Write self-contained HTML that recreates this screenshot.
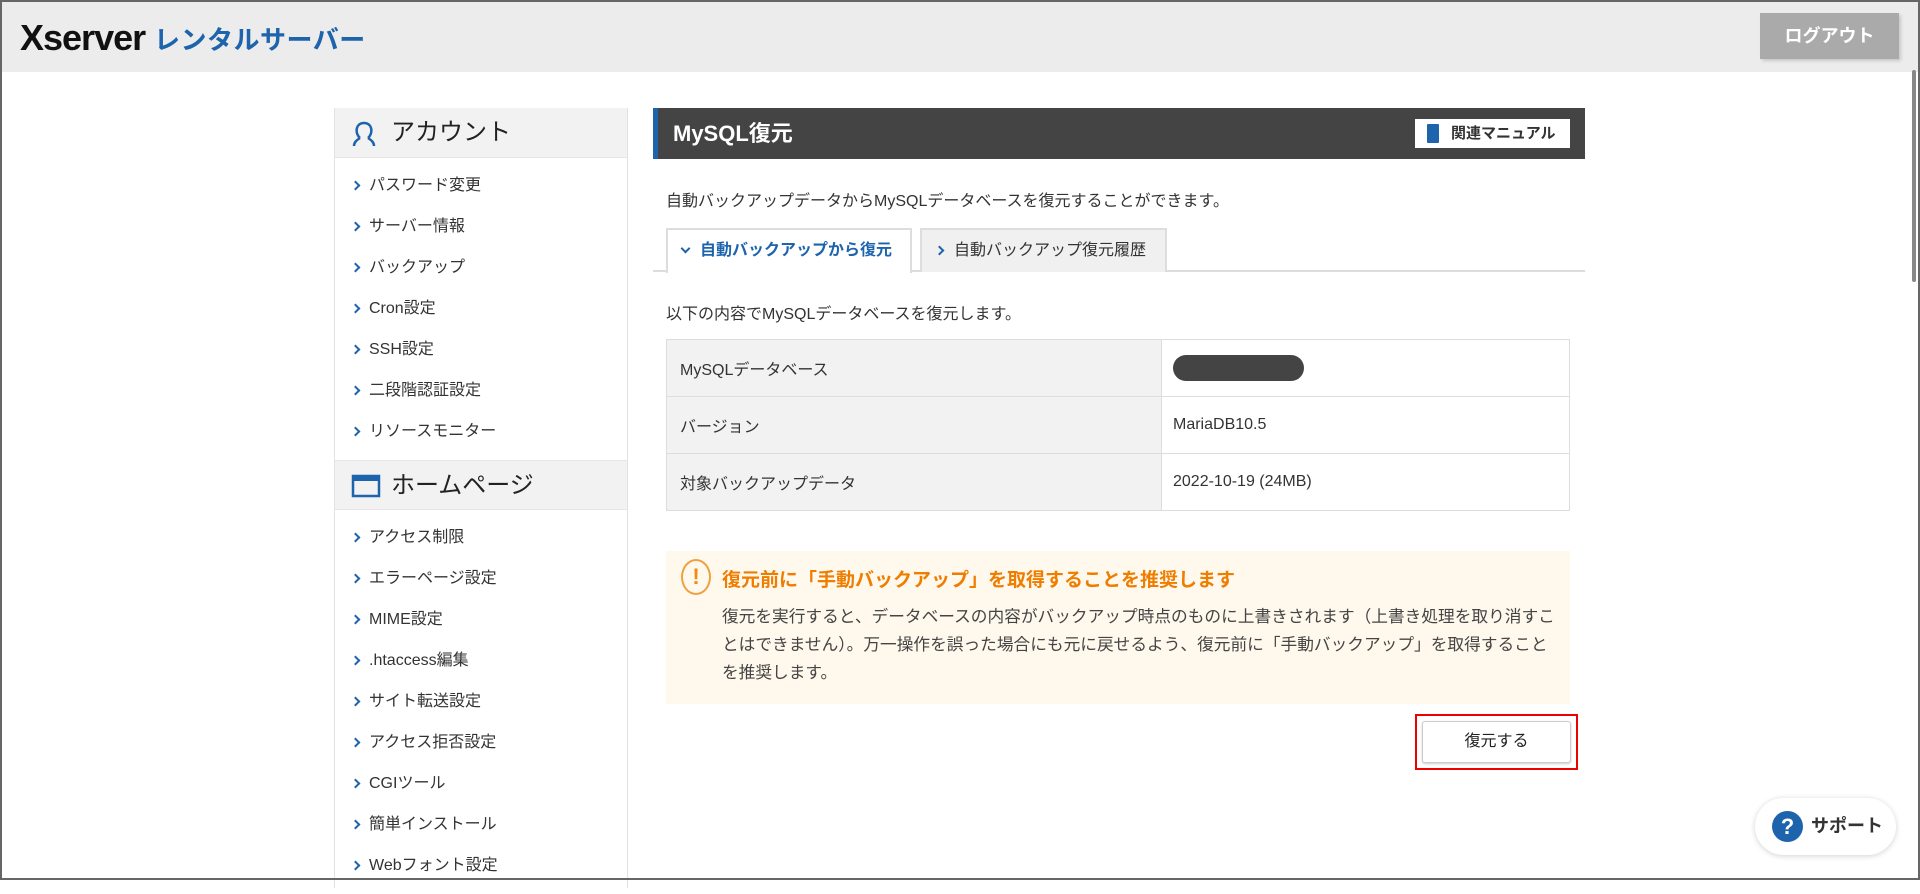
<!DOCTYPE html>
<html><head><meta charset="utf-8"><style>
*{margin:0;padding:0;box-sizing:border-box}
body{width:1920px;height:880px;overflow:hidden;background:#fff;font-family:"Liberation Sans","Noto Sans CJK JP",sans-serif;color:#333;position:relative}
.frame{position:absolute;inset:0;border:2px solid #666;pointer-events:none;z-index:9}
.hdr{position:absolute;left:0;top:0;width:1920px;height:72px;background:#ececec}
.logo1{position:absolute;left:20px;top:17px;font-size:36px;font-weight:bold;color:#111;letter-spacing:-1px}
.logo2{position:absolute;left:154px;top:20px;font-size:26px;font-weight:bold;color:#1e64ad;letter-spacing:0.5px}
.logout{position:absolute;left:1760px;top:13px;width:139px;height:46px;background:#aaa;color:#fff;font-weight:bold;font-size:18px;text-align:center;line-height:46px;box-shadow:2px 2px 3px rgba(0,0,0,.15)}
.scroll{position:absolute;left:1912px;top:70px;width:4px;height:212px;background:#888;border-radius:2px}
.side{position:absolute;left:334px;top:108px;width:294px;height:780px;border-left:1px solid #e2e2e2;border-right:1px solid #e2e2e2}
.sh{height:50px;background:#f2f2f2;font-size:24px;color:#222;padding-left:56px;line-height:50px;position:relative;border-bottom:1px solid #e6e6e6}
.sh svg{position:absolute;left:16px;top:12px}
.grp{padding:7px 0 8px}
.si{height:41px;line-height:41px;font-size:16px;padding-left:34px;position:relative;color:#333}
.si:before{content:"";position:absolute;left:17px;top:17px;width:5px;height:5px;border-right:2px solid #1e64ad;border-bottom:2px solid #1e64ad;transform:rotate(-45deg)}
.main{position:absolute;left:653px;top:108px;width:932px}
.tbar{height:51px;background:#444;border-left:5px solid #1e64ad;color:#fff;font-weight:bold;font-size:22px;line-height:51px;padding-left:15px;position:relative}
.man{position:absolute;left:757px;top:11px;width:155px;height:29px;background:#fff;color:#333;font-size:15px;line-height:29px;padding-left:36px}
.man i{position:absolute;left:12px;top:5px;width:12px;height:19px;background:#1e64ad;border-radius:1px}
.desc{position:absolute;left:13px;top:79px;font-size:16px}
.tabline{position:absolute;left:0;top:162px;width:932px;height:2px;background:#ddd}
.tab{position:absolute;top:120px;height:44px;border:2px solid #ddd;border-bottom:none;font-size:16px;line-height:42px}
.t1{left:13px;width:246px;background:#fff;color:#1e64ad;font-weight:bold;padding-left:32px;height:45px}
.t2{left:267px;width:247px;background:#f0f0f0;padding-left:32px}
.t1:before{content:"";position:absolute;left:14px;top:15px;width:5px;height:5px;border-right:2px solid #1e64ad;border-bottom:2px solid #1e64ad;transform:rotate(45deg)}
.t2:before{content:"";position:absolute;left:14px;top:17px;width:5px;height:5px;border-right:2px solid #1e64ad;border-bottom:2px solid #1e64ad;transform:rotate(-45deg)}
.p2{position:absolute;left:13px;top:192px;font-size:16px}
table{position:absolute;left:13px;top:231px;width:904px;border-collapse:collapse;font-size:16px}
td{border:1px solid #ddd;height:57px;vertical-align:middle}
td.l{width:495px;background:#f2f2f2;padding-left:13px}
td.v{padding-left:11px;background:#fff}
.pill{display:inline-block;width:131px;height:26px;background:#444;border-radius:13px;vertical-align:middle}
.warn{position:absolute;left:13px;top:443px;width:904px;height:153px;background:#fff8ec}
.wic{position:absolute;left:15px;top:8px;width:30px;height:36px;border:2px solid #f0a040;border-radius:50%;color:#f08a10;font-weight:bold;text-align:center;line-height:32px;font-size:22px}
.wt{position:absolute;left:56px;top:14px;color:#ee7d00;font-weight:bold;font-size:19px}
.wb{position:absolute;left:56px;top:52px;width:836px;font-size:16.7px;line-height:28px;color:#444}
.red{position:absolute;left:762px;top:606px;width:163px;height:56px;border:2px solid #e00}
.btn{position:absolute;left:5px;top:5px;width:149px;height:42px;background:#fff;border:1px solid #ccc;border-radius:3px;box-shadow:0 1px 2px rgba(0,0,0,.2);text-align:center;line-height:40px;font-size:16px;color:#222}
.sup{position:absolute;left:1755px;top:798px;width:141px;height:57px;background:#fff;border-radius:29px;box-shadow:0 1px 6px rgba(0,0,0,.18);font-weight:bold;font-size:18px;color:#333;line-height:57px;padding-left:56px}
.sup i{position:absolute;left:17px;top:13px;width:31px;height:31px;border-radius:50%;background:#1e64ad;color:#fff;font-style:normal;text-align:center;line-height:31px;font-size:22px}
</style></head><body>
<div class="hdr">
<div class="logo1">Xserver</div>
<div class="logo2">レンタルサーバー</div>
<div class="logout">ログアウト</div>
</div>
<div class="scroll"></div>
<div class="side">
<div class="sh"><svg width="26" height="28" viewBox="0 0 26 28"><path d="M9 18 C4 14 4 3 13 3 C22 3 22 14 17 18 M9 18 C6 20 3 22 3 26 M17 18 C20 20 23 22 23 26" fill="none" stroke="#1e64ad" stroke-width="2.5"/></svg>アカウント</div>
<div class="grp">
<div class="si">パスワード変更</div><div class="si">サーバー情報</div><div class="si">バックアップ</div><div class="si">Cron設定</div><div class="si">SSH設定</div><div class="si">二段階認証設定</div><div class="si">リソースモニター</div>
</div>
<div class="sh" style="border-top:1px solid #e6e6e6"><svg width="30" height="26" viewBox="0 0 30 26"><rect x="2" y="3" width="26" height="20" fill="none" stroke="#1e64ad" stroke-width="2.5"/><rect x="2" y="3" width="26" height="5" fill="#1e64ad"/></svg>ホームページ</div>
<div class="grp">
<div class="si">アクセス制限</div><div class="si">エラーページ設定</div><div class="si">MIME設定</div><div class="si">.htaccess編集</div><div class="si">サイト転送設定</div><div class="si">アクセス拒否設定</div><div class="si">CGIツール</div><div class="si">簡単インストール</div><div class="si">Webフォント設定</div>
</div>
</div>
<div class="main">
<div class="tbar">MySQL復元<div class="man"><i></i>関連マニュアル</div></div>
<div class="desc">自動バックアップデータからMySQLデータベースを復元することができます。</div>
<div class="tabline"></div>
<div class="tab t1">自動バックアップから復元</div>
<div class="tab t2">自動バックアップ復元履歴</div>
<div class="p2">以下の内容でMySQLデータベースを復元します。</div>
<table>
<tr><td class="l">MySQLデータベース</td><td class="v"><span class="pill"></span></td></tr>
<tr><td class="l">バージョン</td><td class="v">MariaDB10.5</td></tr>
<tr><td class="l">対象バックアップデータ</td><td class="v">2022-10-19 (24MB)</td></tr>
</table>
<div class="warn"><div class="wic">!</div><div class="wt">復元前に「手動バックアップ」を取得することを推奨します</div>
<div class="wb">復元を実行すると、データベースの内容がバックアップ時点のものに上書きされます（上書き処理を取り消すことはできません）。万一操作を誤った場合にも元に戻せるよう、復元前に「手動バックアップ」を取得すること<br>を推奨します。</div></div>
<div class="red"><div class="btn">復元する</div></div>
</div>
<div class="sup"><i>?</i>サポート</div>
<div class="frame"></div>
</body></html>
